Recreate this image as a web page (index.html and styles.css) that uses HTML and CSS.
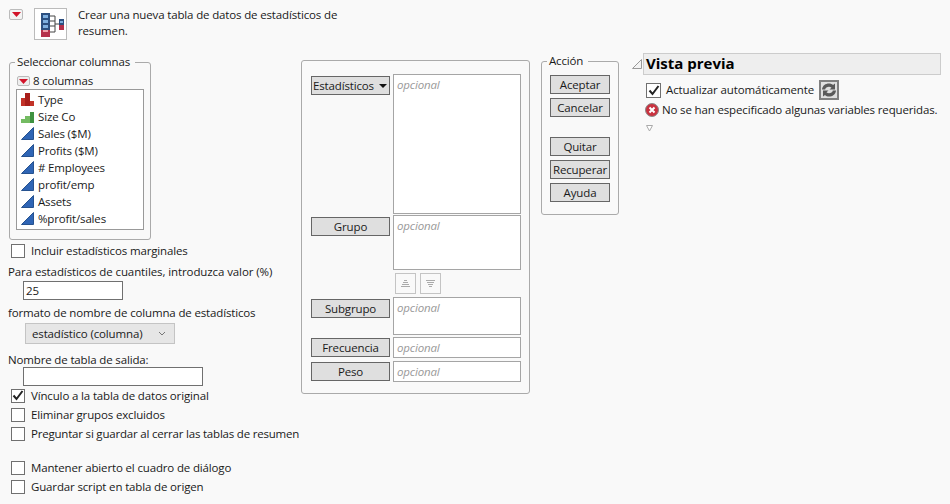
FILE: index.html
```html
<!DOCTYPE html>
<html lang="es">
<head>
<meta charset="utf-8">
<title>Resumen</title>
<link rel="stylesheet" href="styles.css">
</head>
<body>
<div class="top">
  <span class="redbtn"><svg width="9" height="5" viewBox="0 0 9 5"><path d="M0 0h9L4.500 5z" fill="#d2142a"/></svg></span>
  <span class="topicon">
    <svg width="27" height="28" viewBox="0 0 27 28">
      <rect x="4" y="3" width="9" height="24" fill="#2c4f80"/>
      <rect x="6" y="5" width="5" height="3" fill="#7fb0e0"/><rect x="6" y="10" width="5" height="3" fill="#7fb0e0"/><rect x="6" y="15" width="5" height="3" fill="#7fb0e0"/>
      <rect x="4" y="20" width="9" height="7" fill="#b5304a"/><rect x="6" y="20" width="5" height="2" fill="#f0a0a8"/>
      <path d="M13 6h5v8h4M13 11h5M13 16h5M13 22h5v-8" fill="none" stroke="#444" stroke-width="1"/>
      <rect x="22" y="9" width="5" height="11" fill="#2c4f80"/>
      <rect x="23" y="11" width="3" height="2" fill="#7fb0e0"/><rect x="22" y="15" width="5" height="5" fill="#b5304a"/>
    </svg>
  </span>
  <div class="topdesc">Crear una nueva tabla de datos de estadísticos de resumen.</div>
</div>
<div class="page">
  <div class="left">
    <fieldset class="group cols">
      <legend>Seleccionar columnas</legend>
      <div class="colhead"><span class="redbtn small"><svg width="9" height="5" viewBox="0 0 9 5"><path d="M0 0h9L4.500 5z" fill="#d2142a"/></svg></span>8 columnas</div>
      <ul class="collist">
        <li><svg class="ci" width="13" height="13" viewBox="0 0 13 13"><path d="M0 5h4v8H0zM9 8h4v5H9z" fill="#c23228"/><path d="M4 0h5v13H4z" fill="#a81e1a"/></svg>Type</li>
        <li><svg class="ci" width="13" height="13" viewBox="0 0 13 13"><path d="M0 9h4v4H0zM4 6h5v7H4z" fill="#74bb62"/><path d="M9 2h4v11H9z" fill="#3f9240"/></svg>Size Co</li>
        <li><svg class="ci" width="13" height="13" viewBox="0 0 13 13"><path d="M0.500 12.500L12.500 0.500v12z" fill="#2f65b5" stroke="#26528f"/></svg>Sales ($M)</li>
        <li><svg class="ci" width="13" height="13" viewBox="0 0 13 13"><path d="M0.500 12.500L12.500 0.500v12z" fill="#2f65b5" stroke="#26528f"/></svg>Profits ($M)</li>
        <li><svg class="ci" width="13" height="13" viewBox="0 0 13 13"><path d="M0.500 12.500L12.500 0.500v12z" fill="#2f65b5" stroke="#26528f"/></svg># Employees</li>
        <li><svg class="ci" width="13" height="13" viewBox="0 0 13 13"><path d="M0.500 12.500L12.500 0.500v12z" fill="#2f65b5" stroke="#26528f"/></svg>profit/emp</li>
        <li><svg class="ci" width="13" height="13" viewBox="0 0 13 13"><path d="M0.500 12.500L12.500 0.500v12z" fill="#2f65b5" stroke="#26528f"/></svg>Assets</li>
        <li><svg class="ci" width="13" height="13" viewBox="0 0 13 13"><path d="M0.500 12.500L12.500 0.500v12z" fill="#2f65b5" stroke="#26528f"/></svg>%profit/sales</li>
      </ul>
    </fieldset>
    <label class="check first"><span class="box"></span>Incluir estadísticos marginales</label>
    <div class="label l1">Para estadísticos de cuantiles, introduzca valor (%)</div>
    <div class="field f1">25</div>
    <div class="label l2">formato de nombre de columna de estadísticos</div>
    <div class="select">estadístico (columna)<svg width="8" height="5" viewBox="0 0 8 5"><path d="M1 1l3 3 3-3" fill="none" stroke="#777"/></svg></div>
    <div class="label l3">Nombre de tabla de salida:</div>
    <div class="field f2"></div>
    <label class="check c1"><span class="box"><svg width="12" height="11" viewBox="0 0 12 11"><path d="M1.500 5.500l3 3.500 6-8" fill="none" stroke="#222" stroke-width="2"/></svg></span>Vínculo a la tabla de datos original</label>
    <label class="check"><span class="box"></span>Eliminar grupos excluidos</label>
    <label class="check longtext"><span class="box"></span>Preguntar si guardar al cerrar las tablas de resumen</label>
    <label class="check gap"><span class="box"></span>Mantener abierto el cuadro de diálogo</label>
    <label class="check"><span class="box"></span>Guardar script en tabla de origen</label>
  </div>

  <div class="roles">
    <button class="btn role menu">Estadísticos<svg width="8" height="4" viewBox="0 0 8 4"><path d="M0 0h8L4 4z" fill="#111"/></svg></button>
    <div class="drop h140">opcional</div>
    <button class="btn role">Grupo</button>
    <div class="drop h55">opcional</div>
    <div class="arrows">
      <span class="arrow"><svg width="9" height="9" viewBox="0 0 9 9"><path d="M3 1h3v1H3zM2 3h5v1H2zM1 5h7v1H1zM0 7h9v1H0z" fill="#aaa"/></svg></span>
      <span class="arrow"><svg width="9" height="9" viewBox="0 0 9 9"><path d="M0 1h9v1H0zM1 3h7v1H1zM2 5h5v1H2zM3 7h3v1H3z" fill="#aaa"/></svg></span>
    </div>
    <button class="btn role">Subgrupo</button>
    <div class="drop h38">opcional</div>
    <button class="btn role tight">Frecuencia</button>
    <div class="drop h21 after">opcional</div>
    <button class="btn role tight">Peso</button>
    <div class="drop h21">opcional</div>
  </div>

  <fieldset class="group action">
    <legend>Acción</legend>
    <button class="btn act">Aceptar</button>
    <button class="btn act">Cancelar</button>
    <button class="btn act sep">Quitar</button>
    <button class="btn act">Recuperar</button>
    <button class="btn act">Ayuda</button>
  </fieldset>

  <section class="preview">
    <div class="phead">
      <svg class="disc" width="10" height="10" viewBox="0 0 10 10"><path d="M9.500 0.500v9h-9z" fill="#f4f4f4" stroke="#999"/></svg>
      <h2>Vista previa</h2>
    </div>
    <div class="prow">
      <span class="box"><svg width="12" height="11" viewBox="0 0 12 11"><path d="M1.500 5.500l3 3.500 6-8" fill="none" stroke="#222" stroke-width="2"/></svg></span>
      <span>Actualizar automáticamente</span>
      <span class="refresh"><svg width="16" height="16" viewBox="0 0 16 16"><path d="M1 7.500C1.500 3.500 4.500 1.500 8 1.500c1.500 0 3 .5 4 1.500l2-1.500v6H8.500l2-1.700c-.7-.7-1.600-1-2.500-1-2 0-3.500 1-3.800 2.700zM15 8.500c-.5 4-3.500 6-7 6-1.500 0-3-.5-4-1.500l-2 1.500v-6h5.500l-2 1.700c.7.7 1.600 1 2.500 1 2 0 3.500-1 3.800-2.700z" fill="#5a5a5a"/></svg></span>
    </div>
    <div class="perr">
      <svg width="14" height="14" viewBox="0 0 14 14"><circle cx="7" cy="7" r="6.500" fill="#c9323f" stroke="#8a8a8a"/><path d="M4.500 4.500l5 5M9.500 4.500l-5 5" stroke="#fff" stroke-width="2"/></svg>
      <span>No se han especificado algunas variables requeridas.</span>
    </div>
    <svg class="tiny" width="7" height="7" viewBox="0 0 7 7"><path d="M0.500 0.500h6L3.500 6z" fill="#fff" stroke="#aaa"/></svg>
  </section>
</div>
</body>
</html>
```
FILE: styles.css
```css
* { box-sizing: border-box; }
html, body { margin: 0; padding: 0; }
body {
  width: 950px;
  height: 504px;
  overflow: hidden;
  background: #f9f9f9;
  color: #1a1a1a;
  font: 11.5px/16px "Open Sans", "Noto Sans", sans-serif;
  letter-spacing: -0.15px;
}

.top { display: flex; align-items: flex-start; height: 53px; padding: 8px 0 0 9px; }
.redbtn {
  display: inline-flex; align-items: center; justify-content: center; flex: none;
  width: 14px; height: 11px; margin-top: 1px;
  border: 1px solid #bbb; border-radius: 2px; background: #f4f4f4;
}
.redbtn.small { width: 13px; height: 10px; margin: 0 3px 0 0; background: #eee; }
.topicon {
  display: flex; align-items: center; justify-content: center; flex: none;
  width: 33px; height: 32px; margin-left: 11px;
  border: 1px solid #bbb; background: #fff;
}
.topdesc { width: 280px; margin: -1px 0 0 11px; line-height: 16px; }

.page { display: flex; align-items: flex-start; }
.left { width: 301px; flex: none; padding-left: 8px; }

.group { margin: 0; border: 1px solid #aaa; border-radius: 3px; min-width: 0; }
.group legend { padding: 0 5px 0 2px; line-height: 16px; white-space: nowrap; }
.cols legend { margin-left: -1px; }
.action legend { margin-left: -3px; }

.cols { width: 142px; height: 186px; margin: 1px 0 0 1px; padding: 3px 6px 0 6px; }
.colhead { display: flex; align-items: center; height: 16px; margin-left: 1px; }
.collist {
  list-style: none; margin: 0; padding: 1px 0 0 4px;
  width: 128px; height: 141px;
  border: 1px solid #999; background: #fff;
}
.collist li { display: flex; align-items: center; gap: 4px; height: 17px; white-space: nowrap; }
.ci { flex: none; }

.check { display: flex; align-items: center; height: 19px; padding-left: 3px; white-space: nowrap; }
.check.first { margin-top: 1px; }
.check.gap { margin-top: 15px; }
.check.longtext { letter-spacing: -0.2px; }
.box {
  display: inline-flex; align-items: center; justify-content: center;
  flex: none; width: 14px; height: 14px; margin-right: 6px;
  border: 1px solid #707070; background: #fff;
}
.label { height: 16px; white-space: nowrap; }
.l1 { margin-top: 4px; letter-spacing: -0.1px; }
.l2 { margin-top: 5px; }
.l3 { margin-top: 8px; }
.field { border: 1px solid #707070; background: #fff; height: 19px; line-height: 17px; padding-left: 2px; margin-left: 15px; }
.f1 { width: 100px; margin-top: 1px; }
.f2 { width: 180px; margin-top: -1px; }
.select {
  display: flex; align-items: center; justify-content: space-between;
  width: 150px; height: 21px; margin: 2px 0 0 17px; padding: 0 8px 0 6px;
  background: #e6e6e6; border: 1px solid #c4c4c4;
}

.roles {
  flex: none;
  display: grid; grid-template-columns: 79px 128px; column-gap: 3px; row-gap: 1px;
  align-items: start; align-content: start;
  width: 229px; height: 334px; margin: 7px 0 0 0; padding: 13px 0 0 9px;
  border: 1px solid #aaa; border-radius: 3px;
}
.btn {
  font: inherit; letter-spacing: inherit; color: inherit; padding: 0;
  border: 1px solid #666; background: #dfdfdf; height: 19px; line-height: 17px;
  white-space: nowrap;
}
.role { margin-top: 2px; }
.role.tight { margin-top: 1px; }
.role.menu { display: flex; align-items: center; justify-content: space-between; padding: 0 2px 0 1px; }
.drop {
  border: 1px solid #a5a5a5; background: #fff; color: #999; font-style: italic;
  padding: 2px 0 0 3px; line-height: 16px;
}
.h140 { height: 140px; }
.h55 { height: 55px; }
.h38 { height: 38px; margin-bottom: 1px; }
.h21 { height: 21px; }
.after { margin-bottom: 2px; }
.arrows { grid-column: 2; display: flex; gap: 4px; margin: 2px 0 2px 2px; }
.arrow {
  display: flex; align-items: center; justify-content: center;
  width: 21px; height: 21px; border: 1px solid #c4c4c4;
}

.action {
  flex: none; width: 78px; height: 162px; margin: 0 0 0 11px; padding: 6px 8px 0 8px;
  display: flex; flex-direction: column; gap: 4px;
}
.act { width: 60px; flex: none; }
.act.sep { margin-top: 16px; }

.preview { flex: none; width: 309px; margin: 0 0 0 13px; }
.phead { display: flex; align-items: center; }
.phead h2 {
  margin: 0 0 0 1px; width: 298px; height: 22px; padding-left: 2px;
  font-size: 15px; line-height: 19px; font-weight: 700; color: #000; letter-spacing: 0;
  background: #eeeeee; border: 1px solid #ccc;
}
.disc { flex: none; }
.prow { display: flex; align-items: center; height: 22px; margin: 4px 0 0 14px; letter-spacing: -0.1px; }
.prow .box { margin-right: 5px; width: 15px; height: 15px; }
.refresh {
  display: flex; align-items: center; justify-content: center;
  width: 20px; height: 20px; margin-left: 5px; background: #dfdfdf; border: 2px solid #808080;
}
.perr { display: flex; align-items: center; gap: 3px; height: 16px; margin: 1px 0 0 13px; white-space: nowrap; }
.perr svg { flex: none; }
.tiny { display: block; margin: 7px 0 0 14px; }
```
